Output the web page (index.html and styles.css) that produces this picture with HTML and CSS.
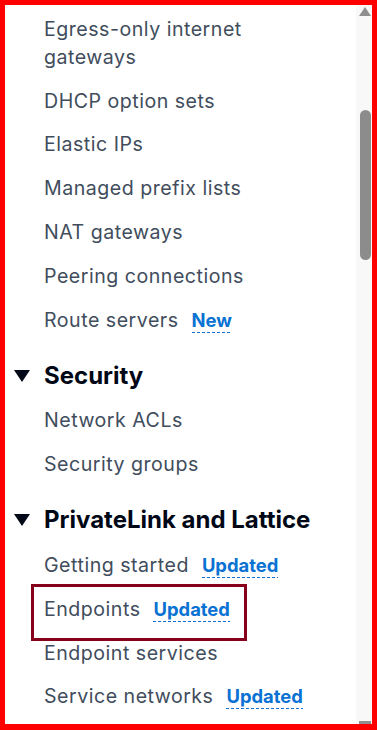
FILE: index.html
```html
<!DOCTYPE html>
<html lang="en">
<head>
<meta charset="utf-8">
<title>VPC navigation</title>
<link rel="stylesheet" href="styles.css">
</head>
<body>
<div class="frame">
  <nav class="nav">
    <ul class="list">
      <li class="item">Egress-only internet gateways</li>
      <li class="item">DHCP option sets</li>
      <li class="item">Elastic IPs</li>
      <li class="item">Managed prefix lists</li>
      <li class="item">NAT gateways</li>
      <li class="item">Peering connections</li>
      <li class="item">Route servers<span class="badge">New</span></li>
    </ul>
    <div class="section">
      <svg class="caret" width="16" height="12" viewBox="0 0 16 12"><polygon points="0,0 16,0 8,12" fill="#000716"/></svg>
      <span class="section-title">Security</span>
    </div>
    <ul class="list">
      <li class="item">Network ACLs</li>
      <li class="item">Security groups</li>
    </ul>
    <div class="section">
      <svg class="caret" width="16" height="12" viewBox="0 0 16 12"><polygon points="0,0 16,0 8,12" fill="#000716"/></svg>
      <span class="section-title">PrivateLink and Lattice</span>
    </div>
    <ul class="list">
      <li class="item">Getting started<span class="badge">Updated</span></li>
      <li class="item item-highlight">Endpoints<span class="badge">Updated</span></li>
      <li class="item">Endpoint services</li>
      <li class="item">Service networks<span class="badge">Updated</span></li>
    </ul>
  </nav>
  <div class="scrollbar">
    <svg class="arrow-up" width="12" height="9" viewBox="0 0 12 9"><polygon points="6,0 12,9 0,9" fill="#8f8f8f"/></svg>
    <div class="thumb"></div>
    <div class="spacer"></div>
    <div class="arrow-down"></div>
  </div>
</div>
</body>
</html>
```

FILE: styles.css
```css
html, body {
  margin: 0;
  padding: 0;
  background: #ffffff;
}

.frame {
  box-sizing: border-box;
  width: 377px;
  height: 730px;
  border-style: solid;
  border-color: #ff0000;
  border-width: 5px 5px 6px 5px;
  display: flex;
  overflow: hidden;
  font-family: Inter, Roboto, "Liberation Sans", sans-serif;
}

.nav {
  flex: 1;
  min-width: 0;
  overflow: hidden;
  padding-top: 3px;
}

.list {
  list-style: none;
  margin: 0;
  padding: 0;
}

.item {
  padding: 8px 40px 8px 39px;
  font-size: 19.6px;
  line-height: 27.8px;
  letter-spacing: 0.5px;
  color: #414d5c;
}

.item-highlight {
  position: relative;
}

.item-highlight::after {
  content: "";
  position: absolute;
  left: 26px;
  top: -4px;
  width: 210px;
  height: 51px;
  border: 3px solid #86001c;
}

.badge {
  display: inline-block;
  margin-left: 13px;
  font-size: 18.4px;
  font-weight: 700;
  letter-spacing: 0;
  color: #0972d3;
  line-height: 23px;
  padding-bottom: 1px;
  background-image: repeating-linear-gradient(to right, #0972d3 0 3px, transparent 3px 5px);
  background-size: 100% 1px;
  background-position: left bottom;
  background-repeat: no-repeat;
}

.section {
  display: flex;
  align-items: center;
  margin: 18.5px 0 8.5px 0;
  padding-left: 9px;
  height: 30px;
}

.caret {
  flex: none;
  margin-right: 14px;
}

.section-title {
  font-size: 24px;
  line-height: 30px;
  font-weight: 700;
  color: #000716;
  white-space: nowrap;
}

.scrollbar {
  flex: none;
  width: 16px;
  background: #f8f8f8;
  display: flex;
  flex-direction: column;
}

.arrow-up {
  display: block;
  margin: 2px 0 0 3px;
}

.thumb {
  margin: 94px 0 0 4px;
  width: 11px;
  height: 150px;
  border-radius: 6px;
  background: #8c8c8c;
}

.spacer {
  flex: 1;
}

.arrow-down {
  margin-left: 3px;
  width: 12px;
  height: 3px;
  background: #8f8f8f;
}
```
